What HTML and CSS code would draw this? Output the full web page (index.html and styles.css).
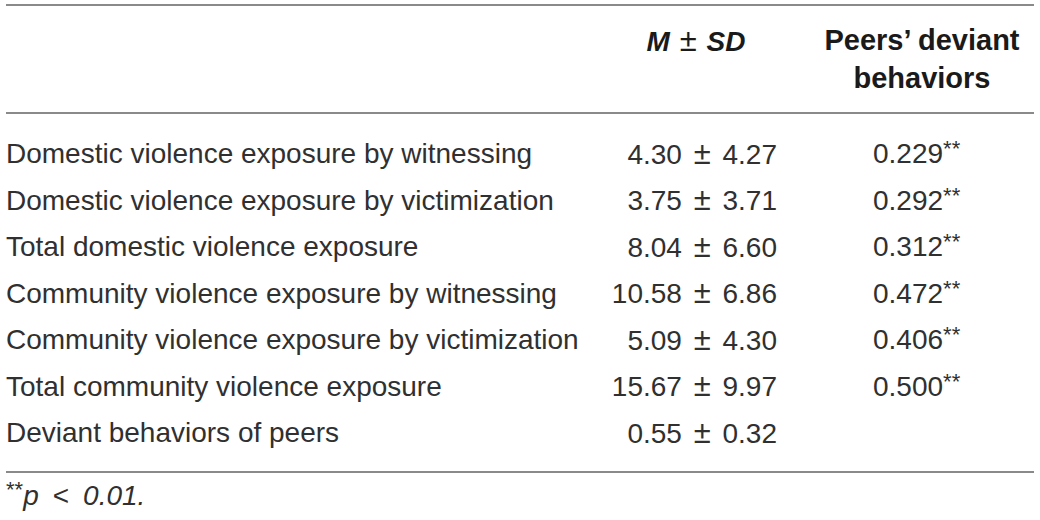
FILE: index.html
```html
<!DOCTYPE html>
<html>
<head>
<meta charset="utf-8">
<link rel="stylesheet" href="styles.css">
</head>
<body>
<div class="wrap">
<table class="stats">
  <colgroup>
    <col class="c-label">
    <col class="c-mean">
    <col class="c-corr">
  </colgroup>
  <thead>
    <tr>
      <th class="label"></th>
      <th class="mean"><i>M</i> <span class="pm">±</span> <i>SD</i></th>
      <th class="corr">Peers’ deviant<br>behaviors</th>
    </tr>
  </thead>
  <tbody>
    <tr><td class="label">Domestic violence exposure by witnessing</td><td class="mean">4.30 <span class="pm">±</span> 4.27</td><td class="corr">0.229<sup>**</sup></td></tr>
    <tr><td class="label">Domestic violence exposure by victimization</td><td class="mean">3.75 <span class="pm">±</span> 3.71</td><td class="corr">0.292<sup>**</sup></td></tr>
    <tr><td class="label">Total domestic violence exposure</td><td class="mean">8.04 <span class="pm">±</span> 6.60</td><td class="corr">0.312<sup>**</sup></td></tr>
    <tr><td class="label">Community violence exposure by witnessing</td><td class="mean">10.58 <span class="pm">±</span> 6.86</td><td class="corr">0.472<sup>**</sup></td></tr>
    <tr><td class="label">Community violence exposure by victimization</td><td class="mean">5.09 <span class="pm">±</span> 4.30</td><td class="corr">0.406<sup>**</sup></td></tr>
    <tr><td class="label">Total community violence exposure</td><td class="mean">15.67 <span class="pm">±</span> 9.97</td><td class="corr">0.500<sup>**</sup></td></tr>
    <tr><td class="label">Deviant behaviors of peers</td><td class="mean">0.55 <span class="pm">±</span> 0.32</td><td class="corr"></td></tr>
  </tbody>
</table>
<p class="note"><sup>**</sup><i>p</i><span class="lt">&lt;</span><i>0.01.</i></p>
</div>
</body>
</html>
```

FILE: styles.css
```css
html, body {
  margin: 0;
  padding: 0;
  background: #fff;
}
body {
  font-family: "Liberation Sans", Arial, sans-serif;
  color: #303030;
}
.wrap {
  padding: 4px 6px 0 6px;
}
.stats {
  width: 1028px;
  border-collapse: collapse;
  table-layout: fixed;
  font-size: 28px;
  border-top: 2px solid #8a8a8a;
  border-bottom: 2px solid #8a8a8a;
}
.c-label { width: 594px; }
.c-mean { width: 192px; }
.c-corr { width: 242px; }
thead tr {
  height: 108px;
  border-bottom: 2px solid #8a8a8a;
}
th {
  font-weight: bold;
  line-height: 38px;
  vertical-align: middle;
  text-align: center;
  padding: 0;
  color: #1a1a1a;
}
th.corr {
  font-size: 29px;
  padding-left: 18px;
}
th.mean {
  vertical-align: top;
  padding-top: 16px;
  padding-left: 0;
}
.pm {
  font-size: 31px;
  margin: 0 4px;
  font-weight: normal;
}
th .pm { margin: 0 2px; }
td {
  height: 46.5px;
  padding: 0;
  line-height: 32px;
  vertical-align: middle;
}
tbody tr:first-child td { padding-top: 17px; }
tbody tr:last-child td { padding-bottom: 14px; }
td.label { text-align: left; white-space: nowrap; }
td.mean { text-align: right; padding-right: 15px; white-space: nowrap; }
td.corr { text-align: left; padding-left: 81px; }
sup {
  font-size: 22px;
  line-height: 0;
  vertical-align: 7px;
}
.note {
  margin: 7px 0 0 0;
  font-size: 28px;
  line-height: 32px;
}
.lt { margin: 0 14px; }
.note sup { vertical-align: 8px; }
```
